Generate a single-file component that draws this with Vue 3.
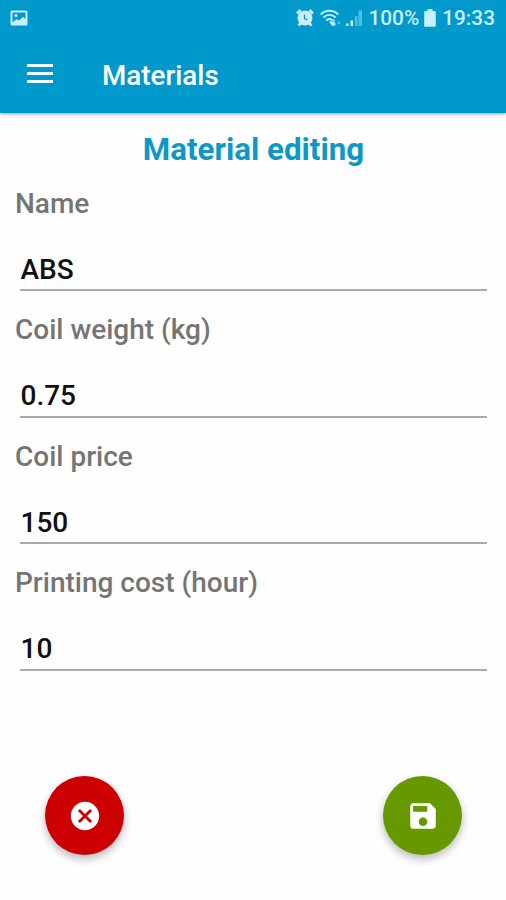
<script setup>
import { ref } from 'vue'

const fields = ref([
  { id: 'name', label: 'Name', value: 'ABS' },
  { id: 'weight', label: 'Coil weight (kg)', value: '0.75' },
  { id: 'price', label: 'Coil price', value: '150' },
  { id: 'cost', label: 'Printing cost (hour)', value: '10' }
])
</script>

<template>
  <div class="screen">
    <header class="header">
      <div class="status">
        <svg class="picture" viewBox="0 0 18 16">
          <path fill-rule="evenodd" d="M2 .5h14A1.5 1.5 0 0 1 17.5 2v12a1.5 1.5 0 0 1-1.5 1.500H2A1.5 1.5 0 0 1 .5 14V2A1.5 1.5 0 0 1 2 .5zM2.500 2.500v10L6.500 9l2.300 1.500L13 7l2.500 2V2.500z" />
          <circle cx="6" cy="5.500" r="1.500" />
        </svg>
        <div class="status-right">
          <svg class="alarm" viewBox="0 0 18 18">
            <path d="M1 4.500 4.500 1M17 4.500 13.500 1M2.500 16.500l3-3M15.500 16.500l-3-3" stroke="currentColor" stroke-width="2.600" />
            <circle cx="9" cy="9" r="7.500" />
            <path class="cut" d="M8.500 5.500v4l3 1.500" />
          </svg>
          <svg class="wifi" viewBox="0 0 21 18">
            <g fill="none" stroke="currentColor" stroke-width="1.900">
              <path d="M.7 5.500c5-5 12.600-5 17.600 0" />
              <path d="M3.500 8.500c3.500-3.500 8.500-3.500 12 0" />
              <path d="M6.300 11.500c1.900-2 4.500-2 6.400 0" />
            </g>
            <path d="M9 12.500h4.500v3.500l-1.500 1z" />
            <path d="M14 10.500v6M12.500 14.500l1.500 2 1.500-2" fill="none" stroke="currentColor" stroke-width="1.200" />
            <path d="M17 14l1.800-2.500L20.500 14l-1.700 2z" opacity=".4" />
          </svg>
          <svg class="signal" viewBox="0 0 18 18">
            <path d="M1 14.500h2.500V17H1zM5.500 11.500h2.500V17H5.500z" />
            <path d="M10 7h2.500v10H10zM13.500 1.500h3.500V17h-3.500z" opacity=".4" />
          </svg>
          <span class="percent">100%</span>
          <svg class="battery" viewBox="0 0 12 18">
            <path d="M3.500 0h5v2H11a.8.8 0 0 1 .8.8v14a1 1 0 0 1-1 1H1.200a1 1 0 0 1-1-1v-14A.8.8 0 0 1 1 2h2.500z" />
          </svg>
          <span class="time">19:33</span>
        </div>
      </div>
      <div class="toolbar">
        <button class="menu" aria-label="Menu"><i></i><i></i><i></i></button>
        <span class="app-title">Materials</span>
      </div>
    </header>

    <h1 class="title">Material editing</h1>
    <form class="form" @submit.prevent>
      <div v-for="field in fields" :key="field.id" class="field">
        <label :for="field.id">{{ field.label }}</label>
        <input :id="field.id" v-model="field.value" type="text" autocomplete="off" spellcheck="false" />
      </div>
    </form>

    <footer class="actions">
      <button class="fab cancel" aria-label="Cancel">
        <svg viewBox="0 0 24 24">
          <path d="M12 2C6.470 2 2 6.470 2 12s4.470 10 10 10 10-4.470 10-10S17.530 2 12 2zm5 13.590L15.590 17 12 13.410 8.410 17 7 15.590 10.590 12 7 8.410 8.410 7 12 10.590 15.590 7 17 8.410 13.410 12 17 15.590z" />
        </svg>
      </button>
      <button class="fab save" aria-label="Save">
        <svg viewBox="0 0 24 24">
          <path d="M17 3H5c-1.110 0-2 .9-2 2v14c0 1.100.89 2 2 2h14c1.100 0 2-.9 2-2V7l-4-4zm-5 16c-1.660 0-3-1.340-3-3s1.340-3 3-3 3 1.340 3 3-1.340 3-3 3zm3-10H5V5h10v4z" />
        </svg>
      </button>
    </footer>
  </div>
</template>

<style>
body {
  background: #fefefe;
}
</style>

<style scoped>
.screen {
  box-sizing: border-box;
  height: 900px;
  display: flex;
  flex-direction: column;
  overflow: hidden;
  background: #fefefe;
  font-family: Roboto, sans-serif;
  font-weight: 500;
}
button {
  border: 0;
  padding: 0;
}
svg {
  display: block;
  flex: none;
  fill: currentColor;
}
.header {
  flex: none;
  height: 112.500px;
  background: #0099cc;
  box-shadow: 0 1px 3px rgba(0, 0, 0, 0.4);
  color: #fff;
}
.status {
  display: flex;
  justify-content: space-between;
  align-items: center;
  height: 36px;
  padding: 0 11px 0 10px;
  color: #c9effb;
}
.picture {
  width: 18px;
  height: 16px;
}
.status-right {
  display: flex;
  align-items: center;
  font-size: 20.800px;
  line-height: 36px;
}
.alarm {
  width: 18px;
  height: 18px;
  margin-right: 6px;
}
.alarm .cut {
  fill: none;
  stroke: #0099cc;
  stroke-width: 1.300;
}
.wifi {
  width: 21px;
  height: 18px;
  margin-right: 4px;
}
.signal {
  width: 18px;
  height: 18px;
  margin-right: 5px;
}
.battery {
  width: 12px;
  height: 18px;
  margin: 0 6px 0 5px;
}
.toolbar {
  display: flex;
  align-items: center;
  height: 78px;
  padding-left: 27px;
}
.menu {
  display: flex;
  flex-direction: column;
  gap: 5px;
  width: 26px;
  margin: -4px 49px 0 0;
  background: none;
}
.menu i {
  height: 3px;
  background: #f2fcff;
}
.app-title {
  margin-top: 1px;
  font-size: 27.800px;
  line-height: 40px;
}
.title {
  flex: none;
  margin: 16.500px 0 13.500px;
  padding-left: 1px;
  color: #0f98c6;
  font-size: 31.300px;
  font-weight: 700;
  line-height: 41px;
  text-align: center;
}
.form {
  flex: none;
}
.field {
  display: flex;
  flex-direction: column;
  gap: 25.500px;
  height: 126.600px;
  padding: 0 19px 0 15px;
  box-sizing: border-box;
}
label {
  color: #757575;
  font-size: 28px;
  line-height: 40px;
}
input {
  box-sizing: border-box;
  height: 42px;
  margin-left: 5px;
  padding: 0 0 0 0.500px;
  border: 0;
  border-bottom: 2px solid #a9a9a9;
  border-radius: 0;
  outline: 0;
  background: transparent;
  color: #111;
  font: 500 28px/40px Roboto, sans-serif;
}
.actions {
  display: flex;
  justify-content: space-between;
  margin: auto 44px 45px 45.400px;
}
.fab {
  display: flex;
  align-items: center;
  justify-content: center;
  width: 79px;
  height: 79px;
  border-radius: 50%;
  color: #fff;
  box-shadow: 0 4px 9px rgba(0, 0, 0, 0.28);
}
.fab svg {
  width: 34px;
  height: 34px;
}
.cancel {
  background: #cc0000;
}
.save {
  background: #669900;
}
</style>
